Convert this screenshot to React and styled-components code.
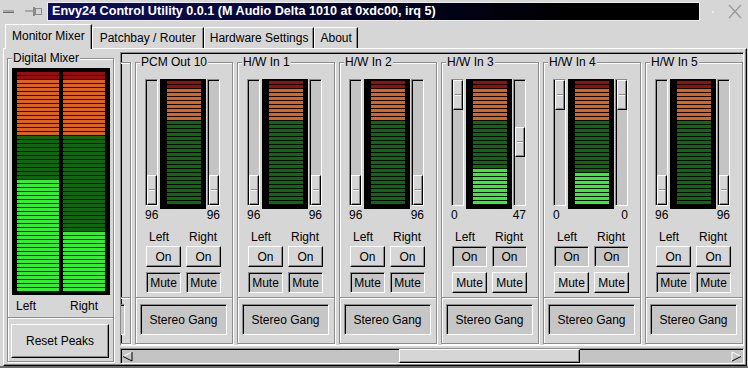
import React, { useLayoutEffect, useRef, useState } from "react";
import styled, { createGlobalStyle, css } from "styled-components";

const GlobalStyle = createGlobalStyle`
  html, body { margin: 0; padding: 0; background: #d6d6d6; }
  body {
    font-family: "Liberation Sans", Arial, sans-serif;
    font-size: 12px;
    color: #000;
  }
  * { box-sizing: border-box; }
`;

const raised = css`
  border: 1px solid;
  border-color: #fff #000 #000 #fff;
  box-shadow: inset -1px -1px 0 #8c8c8c;
`;

const sunken = css`
  border: 1px solid;
  border-color: #8c8c8c #fff #fff #8c8c8c;
  box-shadow: inset 1px 1px 0 #000;
`;

const etched = css`
  border: 1px solid #8c8c8c;
  box-shadow: inset 1px 1px 0 #fff, 1px 1px 0 #fff;
`;

const Window = styled.div`
  width: 748px;
  height: 368px;
  display: flex;
  flex-direction: column;
  overflow: hidden;
  background: #d6d6d6;
  border-bottom: 2px solid #6a6a6a;
`;

const TitleBar = styled.div`
  height: 24px;
  display: flex;
  align-items: center;
  padding: 2px 0 3px;
`;

const TitleIcons = styled.div`
  width: 47px;
  height: 19px;
`;

const TitleText = styled.div`
  width: 653px;
  height: 19px;
  border: 1px solid #ececec;
  background: linear-gradient(to right, #0e0e5e 0%, #04042c 45%, #000 80%);
  color: #fff;
  font-weight: bold;
  font-size: 12.6px;
  line-height: 17px;
  padding-left: 4px;
  white-space: nowrap;
`;

const TitleControls = styled.div`
  flex: 1;
  height: 19px;
`;

const TabRow = styled.div`
  height: 24px;
  display: flex;
  align-items: flex-end;
  padding-left: 5px;
  position: relative;
  z-index: 1;
`;

const Tab = styled.div`
  height: ${(p) => (p.$active ? "25px" : "21px")};
  margin-bottom: ${(p) => (p.$active ? "-1px" : "0")};
  padding: 0 ${(p) => p.$pad || 5}px;
  display: flex;
  align-items: center;
  border: 1px solid;
  border-color: #fff #000 transparent #fff;
  border-bottom: none;
  box-shadow: inset -1px 0 0 #8c8c8c;
  background: #d6d6d6;
  white-space: nowrap;
  padding-bottom: ${(p) => (p.$active ? "2px" : "0")};
`;

const Panel = styled.div`
  flex: 1;
  min-height: 0;
  margin: 0 1px 0 3px;
  ${raised};
  display: flex;
  padding: 3px 2px 1px 2px;
`;

const LeftColumn = styled.div`
  width: 110px;
  flex: none;
  display: flex;
  flex-direction: column;
`;

const FrameBox = styled.div`
  position: relative;
  display: flex;
  flex-direction: column;
  ${etched};
`;

const FrameLabel = styled.span`
  position: absolute;
  top: -8px;
  left: 4px;
  padding: 0 1px;
  background: #d6d6d6;
  line-height: 14px;
  white-space: nowrap;
`;

const Separator = styled.div`
  height: 2px;
  flex: none;
  border-top: 1px solid #8c8c8c;
  border-bottom: 1px solid #fff;
`;

const MixerFrame = styled(FrameBox)`
  flex: 1;
  margin: 6px 0 2px 1px;
  width: 107px;
`;

const MixerBody = styled.div`
  padding: 9px 0 0 4px;
`;

const BigMeter = styled.div`
  width: 98px;
  height: 227px;
  background: #000;
  padding: 4px 5px;
  display: flex;
  gap: 4px;
`;

const MeterColumn = styled.div`
  flex: 1;
  display: flex;
  flex-direction: column;
  gap: 1px;
`;

const Segment = styled.div`
  height: 3px;
  flex: none;
  background: ${(p) => p.$color};
`;

const MixerLabels = styled.div`
  display: flex;
  gap: 34px;
  padding: 4px 0 4px 4px;
  line-height: 14px;
`;

const Button = styled.div`
  display: flex;
  align-items: center;
  justify-content: center;
  white-space: nowrap;
  ${(p) =>
    p.$pressed
      ? css`
          ${sunken};
          background: #c6c6c6;
        `
      : css`
          ${raised};
          background: #d6d6d6;
        `}
`;

const ResetButton = styled(Button)`
  width: 98px;
  height: 34px;
  margin: 5px 0 0 3px;
`;

const ScrolledWindow = styled.div`
  flex: 1;
  min-width: 0;
  margin-left: 4px;
  display: flex;
  flex-direction: column;
  gap: 2px;
`;

const Viewport = styled.div`
  flex: 1;
  min-height: 0;
  ${sunken};
  overflow: hidden;
`;

const ChannelRow = styled.div`
  display: flex;
  width: max-content;
  height: 100%;
`;

const Channel = styled(FrameBox)`
  width: 98px;
  margin: 9px 2px 1px 2px;
`;

const Controls = styled.div`
  padding: 16px 0 4px 9px;
`;

const FaderRow = styled.div`
  display: flex;
  align-items: flex-start;
  height: 130px;
`;

const Trough = styled.div`
  width: 13px;
  height: 127px;
  ${sunken};
  background: #c4c4c4;
  display: flex;
  flex-direction: column;
  padding-left: 1px;
`;

const Thumb = styled.div`
  width: 10px;
  height: 30px;
  flex: none;
  ${raised};
  background: #d6d6d6;
  display: flex;
  align-items: center;
  justify-content: center;
  &::after {
    content: "";
    width: 6px;
    height: 0;
    border-top: 1px solid #8c8c8c;
    border-bottom: 1px solid #fff;
  }
`;

const ChannelMeter = styled.div`
  width: 46px;
  height: 130px;
  margin: 0 1px 0 2px;
  background: #000;
  padding: 2px 5px 0 7px;
  display: flex;
  flex-direction: column;
  gap: 1px;
`;

const Numbers = styled.div`
  width: 75px;
  display: flex;
  justify-content: space-between;
  line-height: 13px;
`;

const ButtonGrid = styled.div`
  display: grid;
  grid-template-columns: 35px 35px;
  column-gap: 5px;
  row-gap: 5px;
  margin: 8px 0 0 1px;
`;

const GridLabel = styled.div`
  padding-left: 3px;
  line-height: 14px;
  margin-bottom: -3px;
`;

const SmallButton = styled(Button)`
  height: 21px;
`;

const GangButton = styled(Button)`
  width: 87px;
  height: 31px;
  margin: 5px 0 0 4px;
`;

const ScrollBar = styled.div`
  height: 16px;
  flex: none;
  ${sunken};
  background: #c4c4c4;
  display: flex;
`;

const Arrow = styled.div`
  width: 13px;
  height: 14px;
  display: flex;
  align-items: center;
  justify-content: center;
`;

const Track = styled.div`
  flex: 1;
  position: relative;
`;

const ScrollThumb = styled.div`
  position: absolute;
  top: 0;
  bottom: 0;
  ${raised};
  background: #d6d6d6;
`;

const COLORS = {
  red: "#9c0c0c",
  orange: "#de631a",
  dark: "#0b6a0b",
  lit: "#2ef22e",
};

const segColor = (i, count, orange, level) => {
  if (i < 2) return COLORS.red;
  if (i < orange) return COLORS.orange;
  return i >= count - level ? COLORS.lit : COLORS.dark;
};

const channels = [
  ...Array.from({ length: 10 }, (_, i) => `PCM Out ${i + 1}`),
  ...Array.from({ length: 10 }, (_, i) => `H/W In ${i + 1}`),
].map((name) => ({ name, left: 96, right: 96, level: 0, on: false, mute: true }));

Object.assign(channels[12], { left: 0, right: 47, level: 9, on: true, mute: false });
Object.assign(channels[13], { left: 0, right: 0, level: 8, on: true, mute: false });

const SCROLL = 906;

function Fader({ value }) {
  return (
    <Trough style={{ paddingTop: Math.round((value * 95) / 96) }}>
      <Thumb />
    </Trough>
  );
}

function ChannelStrip({ ch }) {
  return (
    <Channel>
      <FrameLabel>{ch.name}</FrameLabel>
      <Controls>
        <FaderRow>
          <Fader value={ch.left} />
          <ChannelMeter>
            {Array.from({ length: 31 }, (_, i) => (
              <Segment key={i} $color={segColor(i, 31, 10, ch.level)} />
            ))}
          </ChannelMeter>
          <Fader value={ch.right} />
        </FaderRow>
        <Numbers>
          <span>{ch.left}</span>
          <span>{ch.right}</span>
        </Numbers>
        <ButtonGrid>
          <GridLabel>Left</GridLabel>
          <GridLabel>Right</GridLabel>
          <SmallButton $pressed={ch.on}>On</SmallButton>
          <SmallButton $pressed={ch.on}>On</SmallButton>
          <SmallButton $pressed={ch.mute}>Mute</SmallButton>
          <SmallButton $pressed={ch.mute}>Mute</SmallButton>
        </ButtonGrid>
      </Controls>
      <Separator />
      <GangButton $pressed>Stereo Gang</GangButton>
    </Channel>
  );
}

function TriangleLeft() {
  return (
    <svg width="11" height="11" viewBox="0 0 11 11">
      <path d="M10 1 L1 5.5" stroke="#fff" strokeWidth="1" />
      <path d="M1 5.5 L10 10 L10 1" stroke="#000" strokeWidth="1" fill="none" />
    </svg>
  );
}

function TriangleRight() {
  return (
    <svg width="11" height="11" viewBox="0 0 11 11">
      <path d="M1 10 L1 1 L10 5.5" stroke="#fff" strokeWidth="1" fill="none" />
      <path d="M10 5.5 L1 10" stroke="#000" strokeWidth="1" />
    </svg>
  );
}

export default function App() {
  const viewRef = useRef(null);
  const [thumb, setThumb] = useState({ left: 0.44, width: 0.3 });

  useLayoutEffect(() => {
    const el = viewRef.current;
    el.scrollLeft = SCROLL;
    setThumb({
      left: el.scrollLeft / el.scrollWidth,
      width: el.clientWidth / el.scrollWidth,
    });
  }, []);

  return (
    <>
      <GlobalStyle />
      <Window>
        <TitleBar>
          <TitleIcons>
            <svg width="47" height="19" viewBox="0 0 47 19">
              <rect x="3" y="8" width="11" height="2" fill="#a8a8a8" />
              <rect x="3" y="10" width="11" height="1" fill="#6a6a6a" />
              <rect x="25" y="8" width="8" height="2" fill="#a8a8a8" />
              <rect x="33" y="5" width="2" height="9" fill="#8a8a8a" />
              <rect x="35.5" y="6.5" width="6" height="6" fill="none" stroke="#8a8a8a" />
            </svg>
          </TitleIcons>
          <TitleText>Envy24 Control Utility 0.0.1 (M Audio Delta 1010 at 0xdc00, irq 5)</TitleText>
          <TitleControls>
            <svg width="48" height="19" viewBox="0 0 48 19">
              <rect x="12" y="9" width="2" height="2" fill="#f0f0f0" />
              <path d="M29 3 L41 16 M41 3 L29 16" stroke="#9a9a9a" strokeWidth="1.3" />
            </svg>
          </TitleControls>
        </TitleBar>
        <TabRow>
          <Tab $active $pad={6}>Monitor Mixer</Tab>
          <Tab $pad={7}>Patchbay / Router</Tab>
          <Tab $pad={5}>Hardware Settings</Tab>
          <Tab $pad={5}>About</Tab>
        </TabRow>
        <Panel>
          <LeftColumn>
            <MixerFrame>
              <FrameLabel>Digital Mixer</FrameLabel>
              <MixerBody>
                <BigMeter>
                  {[28, 15].map((level, c) => (
                    <MeterColumn key={c}>
                      {Array.from({ length: 55 }, (_, i) => (
                        <Segment key={i} $color={segColor(i, 55, 16, level)} />
                      ))}
                    </MeterColumn>
                  ))}
                </BigMeter>
                <MixerLabels>
                  <span>Left</span>
                  <span>Right</span>
                </MixerLabels>
              </MixerBody>
              <Separator />
              <ResetButton>Reset Peaks</ResetButton>
            </MixerFrame>
          </LeftColumn>
          <ScrolledWindow>
            <Viewport ref={viewRef}>
              <ChannelRow>
                {channels.map((ch) => (
                  <ChannelStrip key={ch.name} ch={ch} />
                ))}
              </ChannelRow>
            </Viewport>
            <ScrollBar>
              <Arrow>
                <TriangleLeft />
              </Arrow>
              <Track>
                <ScrollThumb
                  style={{ left: `${thumb.left * 100}%`, width: `${thumb.width * 100}%` }}
                />
              </Track>
              <Arrow>
                <TriangleRight />
              </Arrow>
            </ScrollBar>
          </ScrolledWindow>
        </Panel>
      </Window>
    </>
  );
}
